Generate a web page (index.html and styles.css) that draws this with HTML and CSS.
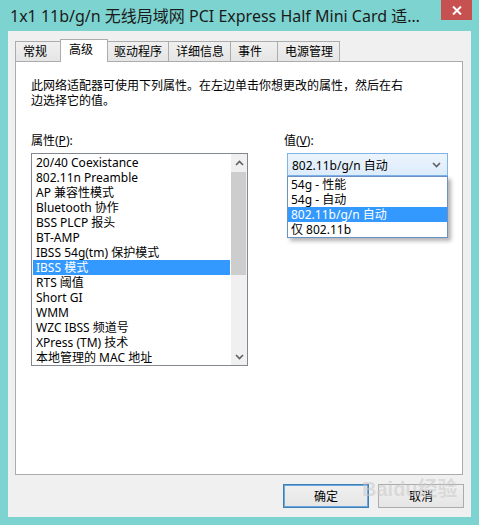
FILE: index.html
```html
<!DOCTYPE html>
<html lang="zh-CN">
<head>
    <meta charset="UTF-8">
    <title>适配器属性</title>
    <link rel="stylesheet" href="styles.css">
</head>
<body>

    <div class="window">
        <!-- Заголовок вікна -->
        <div class="titlebar">
            <span class="title">1x1 11b/g/n 无线局域网 PCI Express Half Mini Card 适…</span>
            <span class="close">
                <svg width="10" height="9" viewBox="0 0 10 9"><path d="M1 0.5 L9 8.5 M9 0.5 L1 8.5" stroke="#fff" stroke-width="2"/></svg>
            </span>
        </div>

        <div class="client">
            <div class="tabs">
                <span class="tab">常规</span>
                <span class="tab active">高级</span>
                <span class="tab">驱动程序</span>
                <span class="tab">详细信息</span>
                <span class="tab">事件</span>
                <span class="tab">电源管理</span>
            </div>

            <div class="panel">
                <p class="desc">此网络适配器可使用下列属性。在左边单击你想更改的属性，然后在右<br>边选择它的值。</p>

                <div class="props">
                    <div class="col-left">
                        <div class="label">属性(<u>P</u>):</div>
                        <div class="listbox">
                            <ul class="items">
                                <li>20/40 Coexistance</li>
                                <li>802.11n Preamble</li>
                                <li>AP 兼容性模式</li>
                                <li>Bluetooth 协作</li>
                                <li>BSS PLCP 报头</li>
                                <li>BT-AMP</li>
                                <li>IBSS 54g(tm) 保护模式</li>
                                <li class="selected">IBSS 模式</li>
                                <li>RTS 阈值</li>
                                <li>Short GI</li>
                                <li>WMM</li>
                                <li>WZC IBSS 频道号</li>
                                <li>XPress (TM) 技术</li>
                                <li>本地管理的 MAC 地址</li>
                            </ul>
                            <div class="scrollbar">
                                <span class="arrow">
                                    <svg width="9" height="6" viewBox="0 0 9 6"><path d="M1 5 L4.5 1.5 L8 5" fill="none" stroke="#606060" stroke-width="1.6"/></svg>
                                </span>
                                <div class="track"><div class="thumb"></div></div>
                                <span class="arrow">
                                    <svg width="9" height="6" viewBox="0 0 9 6"><path d="M1 1 L4.5 4.5 L8 1" fill="none" stroke="#606060" stroke-width="1.6"/></svg>
                                </span>
                            </div>
                        </div>
                    </div>

                    <div class="col-right">
                        <div class="label">值(<u>V</u>):</div>
                        <div class="combo">
                            <span>802.11b/g/n 自动</span>
                            <svg width="9" height="6" viewBox="0 0 9 6"><path d="M1 1 L4.5 4.5 L8 1" fill="none" stroke="#606060" stroke-width="1.6"/></svg>
                        </div>
                        <ul class="dropdown">
                            <li>54g - 性能</li>
                            <li>54g - 自动</li>
                            <li class="selected">802.11b/g/n 自动</li>
                            <li>仅 802.11b</li>
                        </ul>
                    </div>
                </div>
            </div>

            <div class="buttons">
                <button class="btn default">确定</button>
                <button class="btn">取消</button>
            </div>
        </div>

        <!-- водяний знак -->
        <div class="watermark">Bai<b>du</b>经验</div>
    </div>

</body>
</html>
```

FILE: styles.css
```css
body {
    margin: 0;
    font-family: "Noto Sans", "Noto Sans CJK SC", sans-serif;
    font-size: 12px;
    color: #000;
}

.window {
    position: relative;
    width: 479px;
    height: 525px;
    box-sizing: border-box;
    background-color: #7dd3d0;
    padding: 0 8px 8px 8px;
    overflow: hidden;
}

.titlebar {
    height: 31px;
    display: flex;
    align-items: center;
}

.title {
    padding-left: 2px;
    font-size: 16px;
    color: #1b1b1b;
    white-space: nowrap;
    margin-top: -2px;
}

.close {
    position: absolute;
    top: 0;
    right: 7px;
    width: 31px;
    height: 20px;
    background-color: #c75050;
    display: flex;
    align-items: center;
    justify-content: center;
}

.client {
    height: 486px;
    background-color: #f0f0f0;
    padding-top: 8px;
    box-sizing: border-box;
}

.tabs {
    display: flex;
    align-items: flex-end;
    height: 22px;
    padding-left: 8px;
    position: relative;
    z-index: 1;
}

.tab {
    height: 20px;
    min-width: 48px;
    box-sizing: border-box;
    padding: 0 6px 0 7px;
    margin-left: -1px;
    border: 1px solid #acacac;
    border-bottom: none;
    background: linear-gradient(#f0f0f0, #e5e5e5);
    line-height: 19px;
}

.tab.active {
    height: 23px;
    margin: 0 -2px -1px -3px;
    padding: 0 9px 0 8px;
    background: #fff;
    line-height: 19px;
    position: relative;
    z-index: 2;
}

.tab.active + .tab {
    margin-left: 0;
}

.panel {
    margin-left: 7px;
    width: 448px;
    height: 414px;
    box-sizing: border-box;
    border: 1px solid #acacac;
    background-color: #fff;
    padding: 16px 0 0 15px;
}

.desc {
    margin: 0;
    line-height: 15px;
}

.props {
    display: flex;
    gap: 36px;
    margin-top: 25px;
}

.label {
    line-height: 15px;
    margin-bottom: 5px;
}

.listbox {
    width: 217px;
    height: 213px;
    box-sizing: border-box;
    border: 1px solid #828790;
    display: flex;
}

.items {
    list-style: none;
    margin: 0;
    padding: 1px;
    flex: 1;
}

.items li,
.dropdown li {
    height: 15px;
    line-height: 15px;
    padding-left: 3px;
    white-space: nowrap;
}

.items li.selected,
.dropdown li.selected {
    background-color: #3399ff;
    color: #fff;
}

.scrollbar {
    width: 16px;
    display: flex;
    flex-direction: column;
    background-color: #f0f0f0;
}

.arrow {
    height: 17px;
    display: flex;
    align-items: center;
    justify-content: center;
}

.track {
    flex: 1;
}

.thumb {
    height: 103px;
    margin: 1px 1px 0 0;
    background-color: #cdcdcd;
}

.combo {
    margin-left: 3px;
    width: 161px;
    height: 23px;
    box-sizing: border-box;
    border: 1px solid #7eb4ea;
    background: linear-gradient(#ecf4fc, #dcecfc);
    display: flex;
    align-items: center;
    justify-content: space-between;
    padding: 0 6px 0 4px;
}

.dropdown {
    list-style: none;
    margin: 0 0 0 3px;
    width: 161px;
    box-sizing: border-box;
    border: 1px solid #6c8fc4;
    padding: 0;
    background-color: #fff;
    box-shadow: 3px 3px 4px rgba(0, 0, 0, 0.3);
}

.buttons {
    display: flex;
    justify-content: flex-end;
    gap: 9px;
    padding: 9px 7px 0 0;
}

.btn {
    width: 86px;
    height: 24px;
    border: 1px solid #acacac;
    background: linear-gradient(#f0f0f0, #e5e5e5);
    font-family: inherit;
    font-size: 12px;
    color: #000;
    padding: 0;
}

.btn.default {
    border-color: #3c7fb1;
    box-shadow: inset 0 0 0 1px #6aa7e0;
}

.watermark {
    position: absolute;
    left: 362px;
    top: 478px;
    font-family: "Liberation Sans", "Noto Sans CJK SC", sans-serif;
    font-size: 20px;
    font-weight: bold;
    line-height: 22px;
    color: rgba(200, 200, 200, 0.55);
    pointer-events: none;
}
```
